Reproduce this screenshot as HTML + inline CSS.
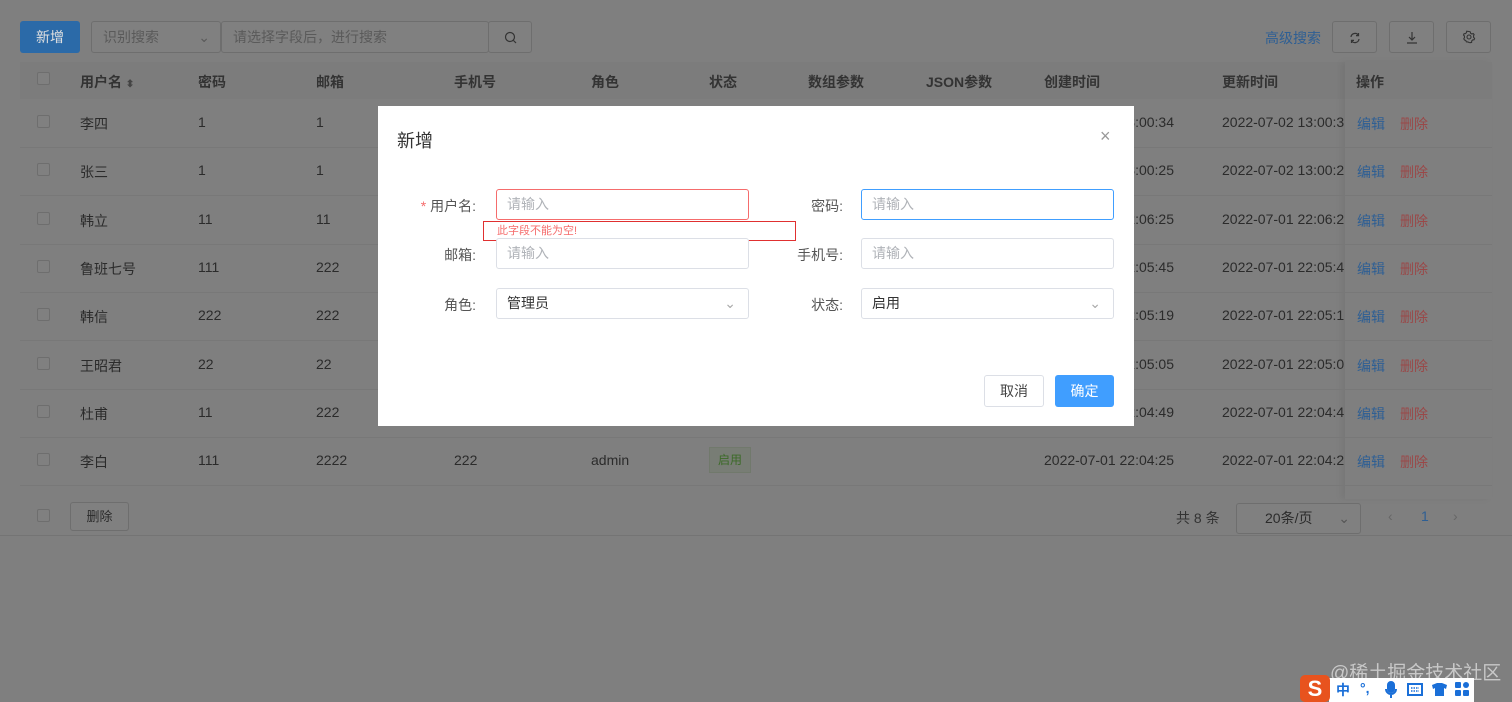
<!DOCTYPE html>
<html><head><meta charset="utf-8"><style>
*{box-sizing:border-box;margin:0;padding:0}
body{width:1512px;height:702px;overflow:hidden;position:relative;background:#7f7f7f;font-family:"Liberation Sans","Noto Sans CJK SC",sans-serif;font-size:14px;color:#2b2b2b}
.a{position:absolute;white-space:nowrap}
.btn{position:absolute;border:1px solid #6e6e6e;border-radius:3px;background:#808080}
.cb{position:absolute;width:13px;height:13px;border:1px solid #6e6e6e;border-radius:2px;background:#808080}
.hd{font-weight:bold;color:#333}
.inp{position:absolute;height:31px;border:1px solid #dcdfe6;border-radius:3px;background:#fff;color:#b0b3b8;padding-left:10px;line-height:29px}
.lab{position:absolute;color:#555;text-align:right;width:90px}
</style></head><body>
<div class="a" style="left:0;top:535px;width:1512px;height:1px;background:#747474"></div>
<div class="a" style="left:20px;top:21px;width:60px;height:32px;background:#2b6aa8;border-radius:3px;color:#e0e0e0;text-align:center;line-height:32px">新增</div>
<div class="btn" style="left:91px;top:21px;width:130px;height:32px;color:#5a5a5a;line-height:30px;padding-left:11px">识别搜索<span style="position:absolute;right:10px;">⌄</span></div>
<div class="btn" style="left:221px;top:21px;width:268px;height:32px;color:#5a5a5a;line-height:30px;padding-left:11px">请选择字段后，进行搜索</div>
<div class="btn" style="left:488px;top:21px;width:44px;height:32px"><svg class="a" style="left:15px;top:9px" width="13" height="13" viewBox="0 0 13 13" fill="none" stroke="#333" stroke-width="1.2"><circle cx="6" cy="6" r="4.5"/><path d="M9.5 9.5L12 12"/></svg></div>
<div class="a" style="left:1265px;top:28px;color:#2e5f94">高级搜索</div>
<div class="btn" style="left:1332px;top:21px;width:45px;height:32px"><svg class="a" style="left:16px;top:10px" width="12" height="12" viewBox="0 0 12 12" fill="none" stroke="#333" stroke-width="1.2"><path d="M2 5a4 4 0 0 1 7.5-1.5M10 7a4 4 0 0 1-7.5 1.5"/><path d="M9.5 1v2.6H7M2.5 11V8.4H5"/></svg></div>
<div class="btn" style="left:1389px;top:21px;width:45px;height:32px"><svg class="a" style="left:16px;top:9px" width="12" height="13" viewBox="0 0 12 13" fill="none" stroke="#333" stroke-width="1.2"><path d="M6 1v8M3 6l3 3 3-3M1 12h10"/></svg></div>
<div class="btn" style="left:1446px;top:21px;width:45px;height:32px"><svg class="a" style="left:15px;top:8px" width="14" height="14" viewBox="0 0 14 14" fill="none" stroke="#333" stroke-width="1.1"><circle cx="7" cy="7" r="2"/><path d="M7 1.5l1.3.4.3 1.4 1.3.7 1.3-.5.9 1.1-.6 1.3.1 1.5 1 1-.5 1.3-1.4.2-1 1.1-.1 1.4-1.4.3L7 12.5l-1.2-.6-1.4-.1-.6-1.3L2.6 10 1.8 8.8l.7-1.3-.1-1.5-.9-1 .6-1.3 1.4-.1 1-1.1.2-1.3z"/></svg></div>
<div class="a" style="left:20px;top:62px;width:1472px;height:37px;background:#7c7c7c"></div>
<div class="cb" style="left:37px;top:72px"></div>
<div class="a hd" style="left:80px;top:72px">用户名 <span style="font-size:10px;color:#444">⬍</span></div>
<div class="a hd" style="left:198px;top:72px">密码</div>
<div class="a hd" style="left:316px;top:72px">邮箱</div>
<div class="a hd" style="left:454px;top:72px">手机号</div>
<div class="a hd" style="left:591px;top:72px">角色</div>
<div class="a hd" style="left:709px;top:72px">状态</div>
<div class="a hd" style="left:808px;top:72px">数组参数</div>
<div class="a hd" style="left:926px;top:72px">JSON参数</div>
<div class="a hd" style="left:1044px;top:72px">创建时间</div>
<div class="a hd" style="left:1222px;top:72px">更新时间</div>
<div class="a" style="left:1345px;top:62px;width:147px;height:437px;box-shadow:-4px 0 6px rgba(0,0,0,.06)"></div>
<div class="a hd" style="left:1356px;top:72px">操作</div>
<div id="rows"></div>
<script>
var d=[["李四","1","1","","2022-07-02 13:00:34","2022-07-02 13:00:34"],["张三","1","1","","2022-07-02 13:00:25","2022-07-02 13:00:25"],["韩立","11","11","","2022-07-01 22:06:25","2022-07-01 22:06:25"],["鲁班七号","111","222","","2022-07-01 22:05:45","2022-07-01 22:05:45"],["韩信","222","222","","2022-07-01 22:05:19","2022-07-01 22:05:19"],["王昭君","22","22","","2022-07-01 22:05:05","2022-07-01 22:05:05"],["杜甫","11","222","","2022-07-01 22:04:49","2022-07-01 22:04:49"],["李白","111","2222","222","2022-07-01 22:04:25","2022-07-01 22:04:25"]];
var h="";d.forEach(function(r,i){var y=114+i*48.3;
h+='<div class="cb" style="left:37px;top:'+(y+1)+'px"></div>';
h+='<div class="a" style="left:80px;top:'+y+'px">'+r[0]+'</div><div class="a" style="left:198px;top:'+y+'px">'+r[1]+'</div><div class="a" style="left:316px;top:'+y+'px">'+r[2]+'</div>';
if(i==7)h+='<div class="a" style="left:454px;top:'+y+'px">222</div><div class="a" style="left:591px;top:'+y+'px">admin</div><div class="a" style="left:709px;top:'+(y-5)+'px;height:26px;padding:0 8px;background:#787d75;border:1px solid #71796c;color:#3c6a28;font-size:12px;line-height:24px">启用</div>';
h+='<div class="a" style="left:1044px;top:'+y+'px">'+r[4]+'</div><div class="a" style="left:1222px;top:'+y+'px;width:122px;overflow:hidden">'+r[5]+'</div>';
h+='<div class="a" style="left:1357px;top:'+y+'px;color:#2e5f94">编辑</div><div class="a" style="left:1400px;top:'+y+'px;color:#9a4848">删除</div>';
h+='<div class="a" style="left:20px;top:'+(y+33)+'px;width:1472px;height:1px;background:#787878"></div>';});
document.getElementById("rows").innerHTML=h;
</script>
<div class="cb" style="left:37px;top:509px"></div>
<div class="btn" style="left:70px;top:502px;width:59px;height:29px;text-align:center;line-height:27px;font-size:13px">删除</div>
<div class="a" style="left:1176px;top:508px;color:#333">共 8 条</div>
<div class="btn" style="left:1236px;top:503px;width:125px;height:31px;line-height:29px;padding-left:28px">20条/页<span style="position:absolute;right:10px;color:#555">⌄</span></div>
<div class="a" style="left:1388px;top:508px;color:#666">‹</div>
<div class="a" style="left:1421px;top:508px;color:#2e5f94">1</div>
<div class="a" style="left:1453px;top:508px;color:#666">›</div>
<div class="a" style="left:378px;top:106px;width:756px;height:320px;background:#fff">
<div class="a" style="left:19px;top:21px;font-size:18px;color:#333">新增</div>
<div class="a" style="left:722px;top:20px;font-size:18px;color:#999">×</div>
<div class="lab" style="left:8px;top:90px"><span style="color:#f56c6c">*</span> 用户名:</div>
<div class="inp" style="left:118px;top:83px;width:253px;border-color:#f56c6c">请输入</div>
<div class="a" style="left:105px;top:115px;width:313px;height:20px;border:1px solid #e03030"></div>
<div class="a" style="left:119px;top:116px;font-size:11px;color:#f56c6c">此字段不能为空!</div>
<div class="lab" style="left:375px;top:90px">密码:</div>
<div class="inp" style="left:483px;top:83px;width:253px;border-color:#409eff">请输入</div>
<div class="lab" style="left:8px;top:139px">邮箱:</div>
<div class="inp" style="left:118px;top:132px;width:253px">请输入</div>
<div class="lab" style="left:375px;top:139px">手机号:</div>
<div class="inp" style="left:483px;top:132px;width:253px">请输入</div>
<div class="lab" style="left:8px;top:189px">角色:</div>
<div class="inp" style="left:118px;top:182px;width:253px;color:#333">管理员<span style="position:absolute;right:12px;color:#aaa">⌄</span></div>
<div class="lab" style="left:375px;top:189px">状态:</div>
<div class="inp" style="left:483px;top:182px;width:253px;color:#333">启用<span style="position:absolute;right:12px;color:#aaa">⌄</span></div>
<div class="btn" style="left:606px;top:269px;width:60px;height:32px;text-align:center;line-height:30px;color:#444;background:#fff;border-color:#dcdfe6">取消</div>
<div class="a" style="left:677px;top:269px;width:59px;height:32px;background:#409eff;border-radius:3px;color:#fff;text-align:center;line-height:32px">确定</div>
</div>
<div class="a" style="left:1330px;top:658px;font-size:19px;color:#c8c8c8">@稀土掘金技术社区</div>
<div class="a" style="left:1329px;top:678px;width:145px;height:24px;background:#fff"></div>
<div class="a" style="left:1300px;top:675px;width:30px;height:27px;background:#e8531e;border-radius:5px;color:#fff;font-weight:bold;font-size:22px;text-align:center;line-height:27px">S</div>
<div class="a" style="left:1336px;top:680px;color:#1a6fd8;font-size:14px;font-weight:bold">中</div>
<div class="a" style="left:1360px;top:680px;color:#1a6fd8;font-size:14px;font-weight:bold">°,</div>
<svg class="a" style="left:1384px;top:681px" width="14" height="18" viewBox="0 0 14 18" fill="none" stroke="#1a6fd8" stroke-width="2"><rect x="4" y="1" width="6" height="10" rx="3" fill="#1a6fd8"/><path d="M2 8a5 5 0 0 0 10 0M7 13v4"/></svg>
<svg class="a" style="left:1407px;top:683px" width="16" height="13" viewBox="0 0 16 13"><rect x="1" y="1" width="14" height="11" fill="none" stroke="#1a6fd8" stroke-width="2"/><path d="M4 5h8M4 8h8" stroke="#1a6fd8" stroke-width="1.5" stroke-dasharray="1.5 1"/></svg>
<svg class="a" style="left:1431px;top:682px" width="17" height="15" viewBox="0 0 17 15"><path d="M1 3l5-2h5l5 2-1 4-2-1v8H4V6L2 7z" fill="#1a6fd8"/></svg>
<svg class="a" style="left:1455px;top:682px" width="14" height="14" viewBox="0 0 14 14" fill="#1a6fd8"><rect x="0" y="0" width="6" height="6" rx="1"/><rect x="8" y="0" width="6" height="6" rx="3"/><rect x="0" y="8" width="6" height="6" rx="1"/><rect x="8" y="8" width="6" height="6" rx="1"/></svg>
</body></html>
